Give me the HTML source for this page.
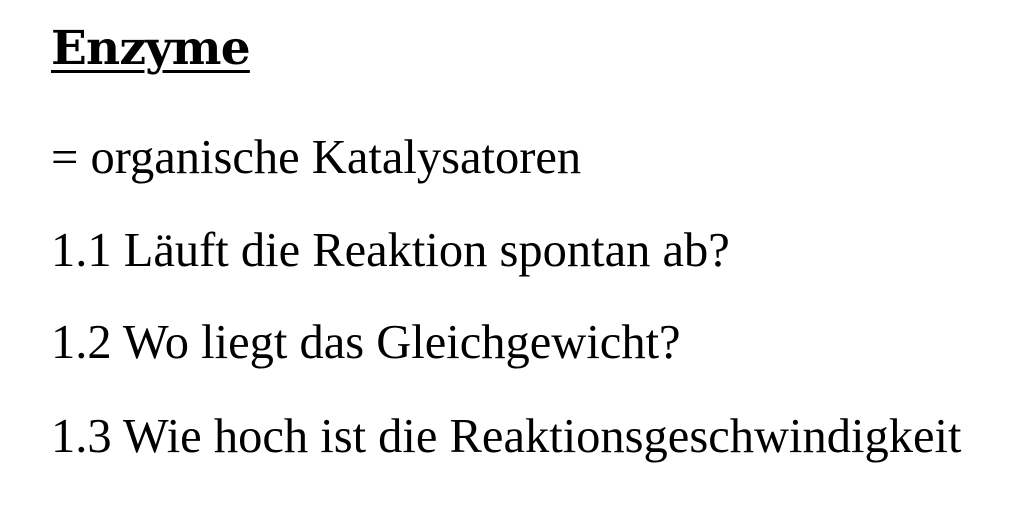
<!DOCTYPE html>
<html><head><meta charset="utf-8"><style>
html,body{margin:0;padding:0;background:#fff;width:1024px;height:512px;overflow:hidden}
.t{position:absolute;left:51px;top:23px;font-family:"DejaVu Serif",serif;font-weight:bold;font-size:47px;color:#000;text-decoration:underline;text-decoration-thickness:3px;text-underline-offset:6px;letter-spacing:-0.8px;line-height:1.1}
.l{position:absolute;left:51px;font-family:"Liberation Serif",serif;font-size:48.5px;color:#000;white-space:nowrap;line-height:1}
</style></head><body>
<div class="t">Enzyme</div>
<div class="l" style="top:134px">= organische Katalysatoren</div>
<div class="l" style="top:227px">1.1 Läuft die Reaktion spontan ab?</div>
<div class="l" style="top:319px">1.2 Wo liegt das Gleichgewicht?</div>
<div class="l" style="top:413px">1.3 Wie hoch ist die Reaktionsgeschwindigkeit</div>
</body></html>
